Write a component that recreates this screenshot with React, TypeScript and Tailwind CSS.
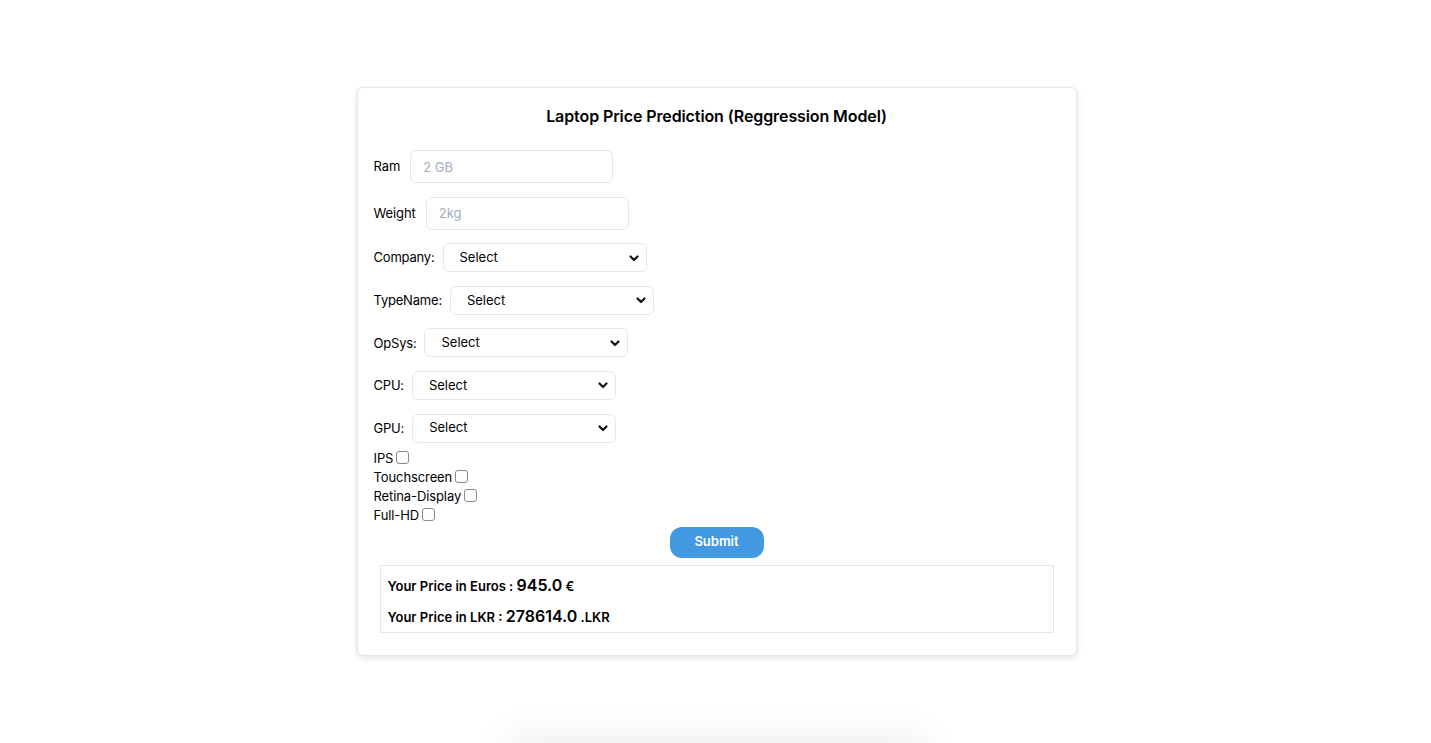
import React from "react";

const Chevron = () => (
  <svg
    className="pointer-events-none absolute right-[7px] top-1/2 -translate-y-1/2"
    width="12"
    height="12"
    viewBox="0 0 12 12"
    fill="none"
  >
    <path d="M2.5 4.5 6 8l3.5-3.5" stroke="#111" strokeWidth="2.2" strokeLinecap="round" strokeLinejoin="round" />
  </svg>
);

const TextRow = ({ label, placeholder }: { label: string; placeholder: string }) => (
  <div className="flex items-center gap-[10px]">
    <label className="pt-[1px] text-[13px] tracking-[-0.1px] text-black">{label}</label>
    <input
      placeholder={placeholder}
      className="h-[33px] w-[203px] rounded-md border border-[#e2e8f0] px-[12px] text-[13px] outline-none placeholder:text-[#a0aec0]"
    />
  </div>
);

const SelectRow = ({ label }: { label: string }) => (
  <div className="flex items-center gap-[8px]">
    <label className="pt-[1px] text-[13px] tracking-[-0.2px] text-black">{label}</label>
    <div className="relative">
      <select className="h-[29px] w-[204px] appearance-none rounded-md border border-[#e2e8f0] bg-white pl-[16px] text-[13px] text-black outline-none">
        <option>Select</option>
      </select>
      <Chevron />
    </div>
  </div>
);

const Check = ({ label }: { label: string }) => (
  <div className="flex h-[19px] items-center text-[13px] tracking-[-0.1px] text-black">
    <span>{label}</span>
    <input
      type="checkbox"
      className="ml-[3px] mb-[3px] h-[13px] w-[13px] appearance-none rounded-[3px] border border-[#8a8a8a] bg-white"
    />
  </div>
);

export default function App() {
  return (
    <div className="h-[743px] overflow-hidden bg-white pl-[2px] font-['Inter',sans-serif]">
      <div className="mx-auto mt-[87px] w-[720px] rounded-md border border-[#e2e8f0] bg-white px-4 pb-[22px] pt-4 shadow-[0_2px_6px_rgba(0,0,0,0.12)]">
        <h1 className="text-center text-[16px] font-semibold leading-6 tracking-[-0.1px] text-black">
          Laptop Price Prediction (Reggression Model)
        </h1>
        <div className="mt-[22px] flex flex-col gap-[13.6px]">
          <TextRow label="Ram" placeholder="2 GB" />
          <TextRow label="Weight" placeholder="2kg" />
          <SelectRow label="Company:" />
          <SelectRow label="TypeName:" />
          <SelectRow label="OpSys:" />
          <SelectRow label="CPU:" />
          <SelectRow label="GPU:" />
        </div>
        <div className="mt-[7px] flex flex-col">
          <Check label="IPS" />
          <Check label="Touchscreen" />
          <Check label="Retina-Display" />
          <Check label="Full-HD" />
        </div>
        <div className="mt-[1px] flex justify-center">
          <button className="h-[31px] w-[94px] rounded-[12px] bg-[#4299e1] text-[13px] font-semibold text-white">
            Submit
          </button>
        </div>
        <div className="mx-[6px] mt-[7px] border border-[#e2e8f0] px-[7px] pt-[4px] font-semibold text-black">
          <div className="h-[31px] text-[13px] leading-[31px]">
            Your Price in Euros : <span className="text-[16px]">945.0</span> €
          </div>
          <div className="h-[31px] text-[13px] leading-[31px]">
            Your Price in LKR : <span className="text-[16px]">278614.0</span> .LKR
          </div>
        </div>
      </div>
      <div className="mx-auto mt-[92px] h-[60px] w-[400px] rounded-lg bg-white shadow-[0_0_40px_12px_rgba(0,0,0,0.07)]" />
    </div>
  );
}
